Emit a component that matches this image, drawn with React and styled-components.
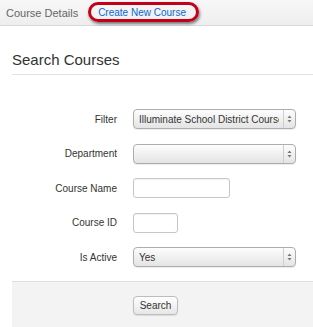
import styled, { createGlobalStyle } from 'styled-components';

const GlobalStyle = createGlobalStyle`
    body {
        margin: 0;
        background: #fff;
        font-family: "Liberation Sans", Arial, Helvetica, sans-serif;
        color: #333;
    }
`

const TopBar = styled.div`
    display: flex;
    align-items: center;
    height: 25px;
    padding-left: 6px;
    background: linear-gradient(#f7f7f7, #eeeeee);
    border-bottom: 1px solid #d9d9d9;
`

const TabText = styled.span`
    font-size: 11px;
    color: #666;
`

const Highlight = styled.span`
    display: flex;
    align-items: center;
    box-sizing: border-box;
    height: 20px;
    margin-left: 10px;
    margin-top: -1px;
    padding: 0 10px 0 7px;
    border: 3px solid #c2001b;
    border-radius: 10px;
    box-shadow: 1px 2px 3px rgba(0,0,0,.5);
`

const TabLink = styled.a`
    font-size: 10px;
    color: #0b67cf;
    text-decoration: none;
    cursor: pointer;
`

const Main = styled.div`
    padding-left: 12px;
`

const Heading = styled.h2`
    margin: 0;
    padding: 24px 0 4px;
    font-size: 15px;
    font-weight: normal;
    line-height: 20px;
    color: #333;
    border-bottom: 1px solid #e2e2e2;
`

const Form = styled.div`
    display: grid;
    grid-template-columns: 105px 163px;
    column-gap: 16px;
    row-gap: 14.5px;
    align-items: center;
    padding: 34px 0 14px;
`

const Label = styled.label`
    font-size: 10px;
    color: #333;
    text-align: right;
`

const SelectBox = styled.div`
    display: flex;
    box-sizing: border-box;
    height: 20px;
    border: 1px solid #adadad;
    border-radius: 4px;
    background: linear-gradient(#fdfdfd, #e4e4e4);
    box-shadow: 0 1px 1px rgba(0,0,0,.08);
    overflow: hidden;
`

const Select = styled.select`
    flex: 1;
    min-width: 0;
    appearance: none;
    -webkit-appearance: none;
    border: none;
    background: transparent;
    padding: 0 4px 0 5px;
    font-family: inherit;
    font-size: 10px;
    color: #333;
    outline: none;
`

const Arrow = styled.span`
    display: flex;
    align-items: center;
    justify-content: center;
    width: 11px;
    border-left: 1px solid #cfcfcf;
`

const Input = styled.input`
    box-sizing: border-box;
    width: ${p => p.$w}px;
    height: 20px;
    border: 1px solid #c6c6c6;
    border-radius: 3px;
    background: #fff;
    box-shadow: inset 0 1px 1px rgba(0,0,0,.05);
    font-family: inherit;
    font-size: 10px;
    outline: none;
`

const Footer = styled.div`
    height: 33px;
    padding: 13px 0 0 121px;
    background: #f3f3f3;
    border-top: 1px solid #e0e0e0;
`

const Button = styled.button`
    box-sizing: border-box;
    width: 45px;
    height: 19px;
    padding: 0;
    border: 1px solid #bdbdbd;
    border-radius: 4px;
    background: linear-gradient(#ffffff, #e6e6e6);
    box-shadow: 0 1px 1px rgba(0,0,0,.1);
    font-family: inherit;
    font-size: 10px;
    color: #333;
    cursor: pointer;
`

const UpDown = () => (
    <svg width="5" height="8" viewBox="0 0 5 8">
        <path d="M2.5 0.5 L4.5 3 L0.5 3 Z" fill="#777" />
        <path d="M2.5 7.5 L4.5 5 L0.5 5 Z" fill="#777" />
    </svg>
)

const Dropdown = ({ value, options }) => (
    <SelectBox>
        <Select defaultValue={value}>
            {options.map(o => <option key={o}>{o}</option>)}
        </Select>
        <Arrow><UpDown /></Arrow>
    </SelectBox>
)

const App = () => {
    return (
        <>
            <GlobalStyle />
            <TopBar>
                <TabText>Course Details</TabText>
                <Highlight>
                    <TabLink>Create New Course</TabLink>
                </Highlight>
            </TopBar>
            <Main>
                <Heading>Search Courses</Heading>
                <Form>
                    <Label>Filter</Label>
                    <Dropdown value="Illuminate School District Courses" options={['Illuminate School District Courses']} />
                    <Label>Department</Label>
                    <Dropdown value="" options={['']} />
                    <Label>Course Name</Label>
                    <Input $w={97} />
                    <Label>Course ID</Label>
                    <Input $w={45} />
                    <Label>Is Active</Label>
                    <Dropdown value="Yes" options={['Yes', 'No']} />
                </Form>
                <Footer>
                    <Button>Search</Button>
                </Footer>
            </Main>
        </>
    )
}

export default App;
